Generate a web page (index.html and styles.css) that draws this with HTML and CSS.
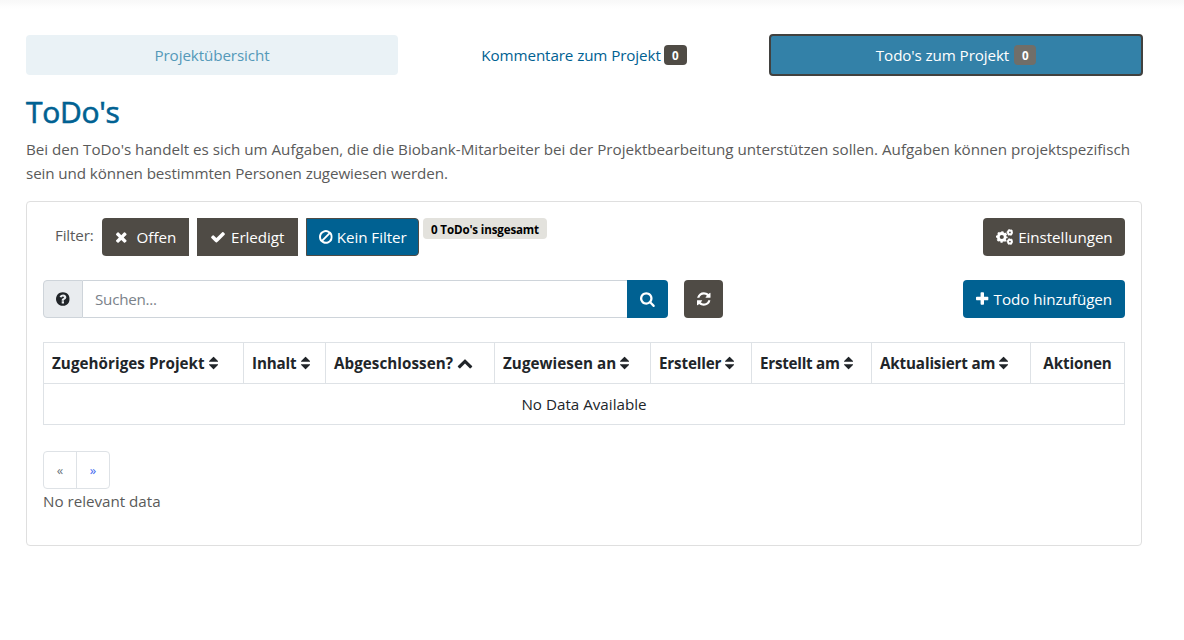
FILE: index.html
```html
<!DOCTYPE html>
<html lang="de">
<head>
<meta charset="utf-8">
<title>ToDo's</title>
<link rel="stylesheet" href="styles.css">
</head>
<body>
<svg class="sprite" aria-hidden="true">
  <symbol id="times" viewBox="192 0 1408 1792"><path d="M1490 1322q0 40-28 68l-136 136q-28 28-68 28t-68-28l-294-294-294 294q-28 28-68 28t-68-28l-136-136q-28-28-28-68t28-68l294-294-294-294q-28-28-28-68t28-68l136-136q28-28 68-28t68 28l294 294 294-294q28-28 68-28t68 28l136 136q28 28 28 68t-28 68l-294 294 294 294q28 28 28 68z"/></symbol>
  <symbol id="check" viewBox="0 0 1792 1792"><path d="M1671 566q0 40-28 68l-724 724-136 136q-28 28-68 28t-68-28l-136-136-362-362q-28-28-28-68t28-68l136-136q28-28 68-28t68 28l294 295 656-657q28-28 68-28t68 28l136 136q28 28 28 68z"/></symbol>
  <symbol id="ban" viewBox="128 0 1536 1792"><path d="M1440 893q0-161-87-295l-754 753q137 89 297 89 111 0 211.5-43.5t173.5-116.5 116-174.5 43-212.5zm-999 299l755-754q-135-91-300-91-148 0-273 73t-198 199-73 274q0 162 89 299zm1223-299q0 157-61 300t-163.5 246-245 164-298.5 61-298.5-61-245-164-163.5-246-61-300 61-299.5 163.5-245.5 245-164 298.5-61 298.5 61 245 164 163.5 245.5 61 299.5z"/></symbol>
  <symbol id="question" viewBox="128 0 1536 1792"><path d="M1024 1376v-192q0-14-9-23t-23-9h-192q-14 0-23 9t-9 23v192q0 14 9 23t23 9h192q14 0 23-9t9-23zm256-672q0-88-55.5-163t-138.5-116-170-41q-243 0-371 213-15 24 8 42l132 100q7 6 19 6 16 0 25-12 53-68 86-92 34-24 86-24 48 0 85.5 26t37.5 59q0 38-20 61t-68 45q-63 28-115.5 86.5t-52.5 125.5v36q0 14 9 23t23 9h192q14 0 23-9t9-23q0-19 21.5-49.5t54.5-49.5q32-18 49-28.5t46-35 44.5-48 28-60.5 12.5-81zm384 192q0 209-103 385.5t-279.5 279.5-385.5 103-385.5-103-279.5-279.5-103-385.5 103-385.5 279.5-279.5 385.5-103 385.5 103 279.5 279.5 103 385.5z"/></symbol>
  <symbol id="search" viewBox="64 0 1664 1792"><path d="M1216 832q0-185-131.5-316.5t-316.5-131.5-316.5 131.5-131.5 316.5 131.5 316.5 316.5 131.5 316.5-131.5 131.5-316.5zm512 832q0 52-38 90t-90 38q-54 0-90-38l-343-342q-179 124-399 124-143 0-273.5-55.5t-225-150-150-225-55.5-273.5 55.5-273.5 150-225 225-150 273.5-55.5 273.5 55.5 225 150 150 225 55.5 273.5q0 220-124 399l343 343q37 37 37 90z"/></symbol>
  <symbol id="refresh" viewBox="128 0 1536 1792"><path d="M1639 1056q0 5-1 7-64 268-268 434.5t-478 166.5q-146 0-282.5-55t-243.5-157l-129 129q-19 19-45 19t-45-19-19-45v-448q0-26 19-45t45-19h448q26 0 45 19t19 45-19 45l-137 137q71 66 161 102t187 36q134 0 250-65t186-179q11-17 53-117 8-23 30-23h192q13 0 22.5 9.5t9.5 22.5zm25-800v448q0 26-19 45t-45 19h-448q-26 0-45-19t-19-45 19-45l138-138q-148-137-349-137-134 0-250 65t-186 179q-11 17-53 117-8 23-30 23h-199q-13 0-22.5-9.5t-9.5-22.5v-7q65-268 270-434.5t480-166.5q146 0 284 55.5t245 156.5l130-129q19-19 45-19t45 19 19 45z"/></symbol>
  <symbol id="plus" viewBox="192 0 1408 1792"><path d="M1600 736v192q0 40-28 68t-68 28h-416v416q0 40-28 68t-68 28h-192q-40 0-68-28t-28-68v-416h-416q-40 0-68-28t-28-68v-192q0-40 28-68t68-28h416v-416q0-40 28-68t68-28h192q40 0 68 28t28 68v416h416q40 0 68 28t28 68z"/></symbol>
  <symbol id="sort" viewBox="384 0 1024 1792"><path d="M1408 1088q0 26-19 45l-448 448q-19 19-45 19t-45-19l-448-448q-19-19-19-45t19-45 45-19h896q26 0 45 19t19 45zm0-384q0 26-19 45t-45 19h-896q-26 0-45-19t-19-45 19-45l448-448q19-19 45-19t45 19l448 448q19 19 19 45z"/></symbol>
  <symbol id="chevron" viewBox="0 0 1792 1792"><path d="M1683 1331l-166 165q-19 19-45 19t-45-19l-531-531-531 531q-19 19-45 19t-45-19l-166-165q-19-19-19-45.5t19-45.5l742-741q19-19 45-19t45 19l742 741q19 19 19 45.5t-19 45.5z"/></symbol>
  <symbol id="cogs" viewBox="0 0 17.2 16">
    <g fill="none" stroke="currentColor">
      <circle cx="5.8" cy="8" r="3.5" stroke-width="2.8"/>
      <circle cx="5.8" cy="8" r="5.1" stroke-width="1.6" stroke-dasharray="2.1 1.905" stroke-dashoffset="1.05"/>
      <circle cx="14" cy="3.4" r="1.9" stroke-width="2"/>
      <circle cx="14" cy="3.4" r="2.9" stroke-width="1" stroke-dasharray="1.6 1.437" stroke-dashoffset=".8"/>
      <circle cx="14" cy="12.6" r="1.9" stroke-width="2"/>
      <circle cx="14" cy="12.6" r="2.9" stroke-width="1" stroke-dasharray="1.6 1.437" stroke-dashoffset=".8"/>
    </g>
  </symbol>
</svg>
<main class="page">
  <nav class="tabs">
    <a class="tab tab-overview"><span>Projektübersicht</span></a>
    <a class="tab tab-comments"><span>Kommentare zum Projekt</span><b class="count">0</b></a>
    <a class="tab tab-todos"><span>Todo's zum Projekt</span><b class="count">0</b></a>
  </nav>
  <h1 class="title">ToDo's</h1>
  <p class="intro"><span class="line-one">Bei den ToDo's handelt es sich um Aufgaben, die die Biobank-Mitarbeiter bei der Projektbearbeitung unterstützen sollen. Aufgaben können projektspezifisch</span><br><span class="line-two">sein und können bestimmten Personen zugewiesen werden.</span></p>
  <section class="card">
    <div class="row">
      <span class="filter-label">Filter:</span>
      <button class="btn btn-open"><svg class="i w1408"><use href="#times"/></svg><span>Offen</span></button>
      <button class="btn btn-done"><svg class="i w1792"><use href="#check"/></svg><span>Erledigt</span></button>
      <button class="btn btn-none"><svg class="i w1536"><use href="#ban"/></svg><span>Kein Filter</span></button>
      <b class="total">0 ToDo's insgesamt</b>
      <button class="btn btn-settings"><svg class="i w1920"><use href="#cogs"/></svg><span>Einstellungen</span></button>
    </div>
    <div class="row row-search">
      <span class="help"><svg class="i w1536"><use href="#question"/></svg></span>
      <input class="search" placeholder="Suchen...">
      <button class="btn btn-search"><svg class="i w1664"><use href="#search"/></svg></button>
      <button class="btn btn-refresh"><svg class="i w1536"><use href="#refresh"/></svg></button>
      <button class="btn btn-add"><svg class="i w1408"><use href="#plus"/></svg><span>Todo hinzufügen</span></button>
    </div>
    <table class="table">
      <colgroup><col class="c1"><col class="c2"><col class="c3"><col class="c4"><col class="c5"><col class="c6"><col class="c7"><col class="c8"></colgroup>
      <tr>
        <th><div class="th th-wide"><span>Zugehöriges Projekt</span><svg class="i w1024"><use href="#sort"/></svg></div></th>
        <th><div class="th"><span>Inhalt</span><svg class="i w1024"><use href="#sort"/></svg></div></th>
        <th><div class="th th-wide"><span>Abgeschlossen?</span><svg class="i w1792"><use href="#chevron"/></svg></div></th>
        <th><div class="th th-wide"><span>Zugewiesen an</span><svg class="i w1024"><use href="#sort"/></svg></div></th>
        <th><div class="th"><span>Ersteller</span><svg class="i w1024"><use href="#sort"/></svg></div></th>
        <th><div class="th th-tight"><span>Erstellt am</span><svg class="i w1024"><use href="#sort"/></svg></div></th>
        <th><div class="th"><span>Aktualisiert am</span><svg class="i w1024"><use href="#sort"/></svg></div></th>
        <th><div class="th th-center"><span>Aktionen</span></div></th>
      </tr>
      <tr><td colspan="8">No Data Available</td></tr>
    </table>
    <div class="pager"><a class="prev">«</a><a class="next">»</a></div>
    <div class="note">No relevant data</div>
  </section>
</main>
</body>
</html>
```
FILE: styles.css
```css
* { box-sizing: border-box; }
body {
  margin: 0;
  height: 640px;
  overflow: hidden;
  background: #fff linear-gradient(#f8f8f8, #fafafa 3px, #fefefe 7px, #fff 10px) no-repeat;
  font: 15.2px/24px "Open Sans", "Noto Sans", sans-serif;
  color: #5a5a5a;
}
.sprite { display: none; }
.page { padding: 34px 41px 0 26px; }
.i { height: 16px; fill: currentColor; color: inherit; flex: none; display: block; }
.w1024 { width: 9.14px; }
.w1408 { width: 12.57px; }
.w1536 { width: 13.71px; }
.w1664 { width: 14.86px; }
.w1792 { width: 16px; }
.w1920 { width: 17.14px; }

.tabs { display: flex; align-items: center; height: 42px; }
.tab {
  display: flex;
  flex: none;
  align-items: center;
  justify-content: center;
  height: 40px;
  width: 372px;
  border-radius: 4px;
  color: #006192;
  letter-spacing: -.1px;
  white-space: nowrap;
}
.tab-overview { background: #eaf2f6; color: #5499b9; }
.tab-todos {
  width: 374px;
  height: 42px;
  margin-left: -1px;
  border: 2px solid #41413f;
  background: #3381a8;
  color: #fff;
}
.count {
  width: 23px;
  height: 20px;
  margin-left: 3px;
  border-radius: 4px;
  background: #4f4b45;
  color: #fff;
  font-size: 11.6px;
  line-height: 21px;
  text-align: center;
}
.tab-todos .count { background: #706e69; width: 22px; margin-left: 5px; }
.title {
  margin: 17px 0 6px;
  color: #006192;
  font-size: 30px;
  font-weight: 500;
  line-height: 38px;
  letter-spacing: -.3px;
  -webkit-text-stroke: .6px #006192;
}
.intro { margin: 0; white-space: nowrap; }
.line-one { letter-spacing: -.017px; }
.line-two { letter-spacing: -.1px; }

.card {
  width: 1116px;
  height: 345px;
  margin-top: 16px;
  padding: 16px;
  border: 1px solid #dfdfdf;
  border-radius: 4px;
}
.row { display: flex; height: 38px; }
.row-search { margin-top: 24px; }
.btn {
  display: flex;
  align-items: center;
  height: 38px;
  padding: 0 0 0 13px;
  border: 0;
  border-radius: 4px;
  background: #4f4b45;
  color: #fff;
  font: inherit;
  letter-spacing: -.05px;
  white-space: nowrap;
}
.filter-label { width: 47px; margin-left: 12px; padding-top: 5px; letter-spacing: -.15px; }
.btn-open { width: 87px; border-radius: 4px 0 0 4px; gap: 9px; }
.btn-done { width: 101px; margin-left: 8px; border-radius: 0; gap: 5px; }
.btn-none { width: 113px; margin-left: 8px; padding-left: 12px; border: 1px solid #4f4b45; border-radius: 0 4px 4px 0; background: #006192; gap: 4px; }
.total {
  width: 124px;
  height: 21px;
  margin-left: 4px;
  border-radius: 4px;
  background: #e3e2dd;
  color: #000;
  font-size: 11.6px;
  line-height: 23px;
  letter-spacing: -.15px;
  text-align: center;
  white-space: nowrap;
}
.btn-settings { width: 142px; margin-left: auto; gap: 5px; }
.help {
  display: flex;
  align-items: center;
  justify-content: center;
  width: 40px;
  border: 1px solid #ced4da;
  border-radius: 4px 0 0 4px;
  background: #e9ecef;
  color: #212529;
}
.search {
  width: 544px;
  border: solid #ced4da;
  border-width: 1px 0;
  padding: 0 12px;
  font: inherit;
  letter-spacing: -.25px;
  outline: 0;
}
.search::placeholder { color: #7b828a; opacity: 1; }
.btn-search { width: 41px; border-radius: 0 4px 4px 0; background: #006192; }
.btn-refresh { width: 39px; margin-left: 16px; }
.btn-add { width: 162px; margin-left: auto; background: #006192; gap: 5px; }

.table {
  width: 1082px;
  margin-top: 24px;
  border-collapse: collapse;
  table-layout: fixed;
  color: #212529;
}
.c1 { width: 200px; }
.c2 { width: 82px; }
.c3 { width: 169px; }
.c4 { width: 156px; }
.c5 { width: 101px; }
.c6 { width: 120px; }
.c7 { width: 159px; }
.c8 { width: 94px; }
.table th, .table td { height: 41px; padding: 0 8px; border: 1px solid #dee2e6; white-space: nowrap; }
.table td { text-align: center; }
.th { display: flex; align-items: center; gap: 4px; letter-spacing: -.15px; }
.th-wide { letter-spacing: .05px; }
.th-tight { letter-spacing: -.25px; }
.th-center { justify-content: center; }
.pager { display: flex; width: 67px; height: 38px; margin-top: 26px; border: 1px solid #dee2e6; border-radius: 4px; font-size: 13px; line-height: 37px; text-align: center; }
.prev { width: 33px; color: #6c757d; border-right: 1px solid #dee2e6; }
.next { flex: 1; color: #4169f0; }
.note { letter-spacing: -.02px; }
```
